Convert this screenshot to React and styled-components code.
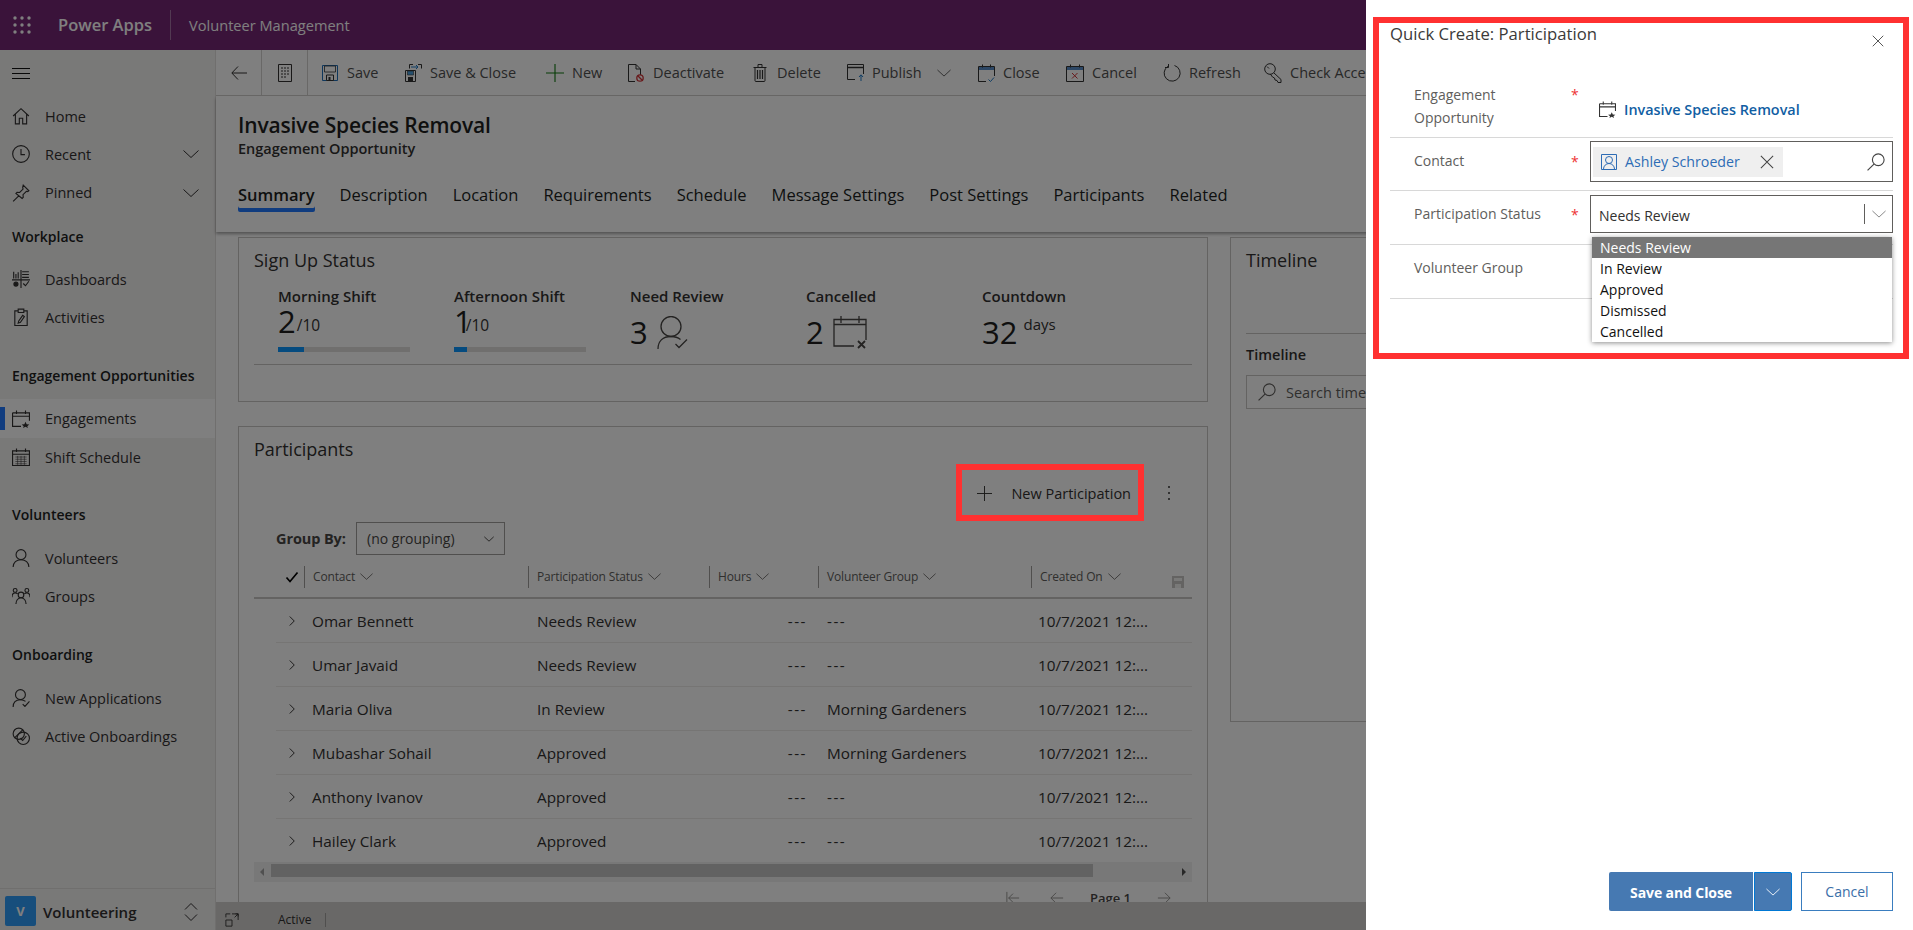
import React from 'react';
import styled, { createGlobalStyle } from 'styled-components';

const GlobalStyle = createGlobalStyle`
  html, body { margin: 0; padding: 0; height: 100%; overflow: hidden; }
  body { font-family: "Open Sans", "Noto Sans", "Liberation Sans", sans-serif; color: #323130; background: #fff; }
  * { box-sizing: border-box; }
`;

const Page = styled.div`
  position: relative;
  width: 1913px;
  height: 930px;
  overflow: hidden;
  display: flex;
  flex-direction: column;
`;
const TopBar = styled.header`
  height: 50px;
  flex: none;
  background: #742774;
  color: #fff;
  display: flex;
  align-items: center;
  padding-left: 13px;
`;
const AppName = styled.div`
  margin-left: 27px;
  font-size: 16.5px;
  font-weight: 600;
  padding-right: 18px;
  border-right: 1px solid rgba(255,255,255,.35);
  line-height: 30px;
`;
const EnvName = styled.div`
  margin-left: 18px;
  font-size: 14.6px;
`;
const Body = styled.div`
  flex: 1;
  display: flex;
  min-height: 0;
`;
const Nav = styled.nav`
  width: 216px;
  flex: none;
  background: #f3f2f1;
  border-right: 1px solid #e1dfdd;
  display: flex;
  flex-direction: column;
  font-size: 14.5px;
`;
const Burger = styled.div`
  height: 47px;
  display: flex;
  align-items: center;
  padding-left: 12px;
  color: #111;
`;
const NavItem = styled.div`
  position: relative;
  height: ${p => p.h || 38}px;
  display: flex;
  align-items: center;
  gap: 15px;
  padding-left: 12px;
  color: #323130;
  background: ${p => p.active ? '#fff' : 'transparent'};
  ${p => p.active && `
    &::before {
      content: "";
      position: absolute;
      left: 0;
      top: 8px;
      width: 5px;
      height: 23px;
      background: #2079ff;
    }
  `}
  svg { flex: none; }
  svg.chev { margin-left: auto; margin-right: 16px; }
`;
const NavTitle = styled.div`
  height: 38px;
  margin-top: ${p => p.mt || 19}px;
  margin-bottom: ${p => p.mb || 5}px;
  display: flex;
  align-items: center;
  padding-left: 12px;
  font-size: 14px;
  font-weight: 600;
  color: #201f1e;
`;
const AreaSwitch = styled.div`
  margin-top: auto;
  height: 42px;
  border-top: 1px solid #e1dfdd;
  display: flex;
  align-items: flex-start;
  padding: 7px 0 0 5px;
  font-size: 15px;
  font-weight: 600;
`;
const AreaTile = styled.div`
  width: 31px;
  height: 30px;
  border-radius: 2px;
  background: #2e9cf8;
  color: #fff;
  font-size: 13px;
  font-weight: 700;
  display: flex;
  align-items: center;
  justify-content: center;
  margin-right: 7px;
`;
const AreaName = styled.div`
  line-height: 33px;
  flex: 1;
`;
const AreaArrows = styled.div`
  margin-right: 17px;
  margin-top: 7px;
  color: #323130;
  line-height: 0;
`;
const Main = styled.main`
  flex: 1;
  min-width: 0;
  background: #fff;
  display: flex;
  flex-direction: column;
`;
const Toolbar = styled.div`
  height: 46px;
  flex: none;
  display: flex;
  align-items: stretch;
  border-bottom: 1px solid #d2d0ce;
  font-size: 14.5px;
  color: #505050;
  white-space: nowrap;
  overflow: hidden;
`;
const ToolSquare = styled.div`
  width: 46px;
  display: flex;
  align-items: center;
  justify-content: center;
  border-right: 1px solid #d2d0ce;
  color: #323130;
`;
const ToolButtons = styled.div`
  display: flex;
  align-items: stretch;
  margin-left: 5px;
`;
const ToolButton = styled.div`
  display: flex;
  align-items: center;
  width: ${p => p.w ? p.w + 'px' : 'auto'};
  svg.caret { margin-left: 15px; }
`;
const ToolIcon = styled.span`
  width: 34px;
  flex: none;
  display: flex;
  justify-content: center;
  align-items: center;
  line-height: 0;
`;
const RecordHead = styled.div`
  height: 136px;
  flex: none;
  padding: 16px 0 0 22px;
  box-shadow: 0 2px 3px rgba(0,0,0,.35);
  position: relative;
  z-index: 1;
`;
const RecordTitle = styled.div`
  font-size: 21px;
  font-weight: 600;
  line-height: 27px;
  color: #201f1e;
  letter-spacing: -0.15px;
`;
const RecordType = styled.div`
  font-size: 14.5px;
  font-weight: 600;
  line-height: 20px;
  color: #323130;
`;
const Tabs = styled.div`
  display: flex;
  gap: 25px;
  margin-top: 24px;
`;
const Tab = styled.div`
  font-size: 16.5px;
  line-height: 24px;
  padding-bottom: 5px;
  color: #201f1e;
  font-weight: ${p => p.active ? 600 : 400};
  ${p => p.active && `
    box-shadow: inset 0 -4px 0 #2079ff;
    border-radius: 2px;
  `}
`;
const Content = styled.div`
  flex: 1;
  min-height: 0;
  overflow: hidden;
  padding: 5px 0 0 22px;
  display: grid;
  grid-template-columns: 970px 680px;
  column-gap: 22px;
  align-content: start;
`;
const LeftCol = styled.div`
  display: flex;
  flex-direction: column;
  gap: 24px;
`;
const Card = styled.section`
  border: 1px solid #c8c6c4;
  padding: 0 15px;
  height: ${p => p.h}px;
  overflow: hidden;
`;
const CardTitle = styled.div`
  font-size: 18px;
  line-height: 24px;
  padding-top: 10px;
  box-sizing: content-box;
  color: #323130;
`;
const Stats = styled.div`
  display: grid;
  grid-template-columns: repeat(5, 176px);
  padding: 14px 0 0 24px;
  height: 93px;
  border-bottom: 1px solid #c8c6c4;
`;
const StatLabel = styled.div`
  font-size: 15px;
  font-weight: 600;
  line-height: 20px;
  color: #323130;
`;
const StatValue = styled.div`
  display: flex;
  align-items: flex-end;
  height: 29px;
  margin-top: ${p => p.mt || 1}px;
  font-size: 31px;
  line-height: 29px;
  color: #201f1e;
  small {
    font-size: 15.5px;
    line-height: 22px;
    margin-left: ${p => p.tight ? -6 : 1}px;
    color: #323130;
  }
  sup {
    font-size: 15px;
    line-height: 14px;
    align-self: flex-start;
    margin: -1px 0 0 6px;
    color: #323130;
  }
  svg { margin: 0 0 -2px 9px; flex: none; }
`;
const Progress = styled.div`
  width: 132px;
  height: 5px;
  margin-top: 11px;
  background: #e1dfdd;
  div { height: 100%; background: #0a96ff; }
`;
const CommandRow = styled.div`
  display: flex;
  justify-content: flex-end;
  align-items: center;
  height: 44px;
  margin-top: 10px;
  font-size: 14.5px;
  color: #323130;
  padding-right: 21px;
`;
const CommandBtn = styled.div`
  display: flex;
  align-items: center;
  gap: 19px;
  margin-right: 36px;
`;
const GroupRow = styled.div`
  display: flex;
  align-items: center;
  height: 33px;
  margin-top: 7px;
  padding-left: 22px;
`;
const GroupLabel = styled.div`
  width: 80px;
  font-size: 14.5px;
  font-weight: 700;
  letter-spacing: -0.1px;
  color: #484644;
`;
const GroupSelect = styled.div`
  width: 149px;
  height: 33px;
  border: 1px solid #a19f9d;
  display: flex;
  align-items: center;
  justify-content: space-between;
  padding: 0 10px;
  font-size: 14px;
  color: #484644;
`;
const GridHead = styled.div`
  display: grid;
  grid-template-columns: 50px 224px 181px 109px 213px 1fr;
  height: 44px;
  border-bottom: 2px solid #c8c6c4;
  font-size: 12px;
  letter-spacing: -0.15px;
  color: #605e5c;
`;
const HeadCell = styled.div`
  margin: 11px 0 9px;
  display: flex;
  align-items: center;
  gap: 5px;
  padding-left: 8px;
  ${p => p.ruled && 'border-left: 1px solid #a19f9d;'}
  ${p => p.center && 'padding-left: 31px;'}
  ${p => p.spread && 'justify-content: space-between; padding-right: 8px;'}
  svg.mini { margin-top: 10px; }
`;
const HeadGroup = styled.span`
  display: flex;
  align-items: center;
  gap: 5px;
  padding-bottom: 2px;
`;
const GridRow = styled.div`
  display: grid;
  grid-template-columns: 36px 225px 181px 109px 211px 1fr;
  height: 44px;
  margin-left: 22px;
  align-items: center;
  font-size: 15.3px;
  color: #323130;
  white-space: nowrap;
  border-bottom: 1px solid ${p => p.last ? 'transparent' : '#edebe9'};
`;
const RowChevron = styled.div`
  padding-left: 10px;
  line-height: 0;
`;
const DashCell = styled.div`
  text-align: right;
  padding-right: 20px;
  letter-spacing: 1.5px;
`;
const DashText = styled.span`
  letter-spacing: 1.5px;
`;
const ScrollTrack = styled.div`
  height: 20px;
  margin-top: -1px;
  background: #f0f0f0;
  display: flex;
  align-items: center;
  justify-content: space-between;
  padding: 0 6px;
  position: relative;
`;
const ScrollThumb = styled.div`
  position: absolute;
  left: 17px;
  top: 2px;
  width: 822px;
  height: 13px;
  background: #c4c4c4;
`;
const Arrow = styled.div`
  width: 0;
  height: 0;
  border-top: 4px solid transparent;
  border-bottom: 4px solid transparent;
  ${p => p.right ? 'border-left: 4px solid #505050;' : 'border-right: 4px solid #a0a0a0;'}
`;
const Pager = styled.div`
  display: flex;
  justify-content: flex-end;
  align-items: center;
  gap: 26px;
  height: 24px;
  margin-top: 4px;
  padding-right: 21px;
  font-size: 13px;
  font-weight: 600;
  color: #484644;
  svg:first-child { margin-right: 4px; }
`;
const RightCol = styled.div`
  display: block;
`;
const TimelineHead = styled.div`
  height: 96px;
  border-bottom: 1px solid #c8c6c4;
`;
const TimelineLabel = styled.div`
  margin-top: 11px;
  font-size: 14.5px;
  font-weight: 600;
  line-height: 20px;
  color: #323130;
`;
const TimelineSearch = styled.div`
  margin-top: 10px;
  height: 34px;
  border: 1px solid #c8c6c4;
  display: flex;
  align-items: center;
  gap: 10px;
  padding-left: 11px;
  font-size: 14.5px;
  color: #605e5c;
`;
const StatusBar = styled.footer`
  height: 28px;
  flex: none;
  background: #d2d0ce;
  display: flex;
  align-items: center;
  padding: 8px 0 0 9px;
  font-size: 12px;
  color: #323130;
  position: relative;
  z-index: 2;
`;
const StatusText = styled.div`
  margin-left: 39px;
  padding-right: 14px;
  border-right: 1px solid #a19f9d;
  line-height: 14px;
`;
const Scrim = styled.div`
  position: absolute;
  inset: 0;
  background: rgba(0,0,0,.5);
  z-index: 10;
`;
const Callout = styled.div`
  position: absolute;
  left: 956px;
  top: 464px;
  width: 188px;
  height: 57px;
  border: 6px solid #ff3131;
  z-index: 11;
`;
const Panel = styled.aside`
  position: absolute;
  top: 0;
  right: 0;
  bottom: 0;
  width: 547px;
  background: #fff;
  z-index: 12;
  padding: 17px 4px 19px 7px;
  display: flex;
  flex-direction: column;
`;
const QuickForm = styled.div`
  height: 342px;
  border: 6px solid #ff3131;
  padding: 0 10px 0 11px;
  position: relative;
`;
const FormHead = styled.div`
  height: 43px;
  display: flex;
  justify-content: space-between;
  padding: 0 9px 0 0;
`;
const FormTitle = styled.div`
  font-size: 16.7px;
  line-height: 22px;
  color: #3b3a39;
`;
const FormClose = styled.div`
  margin-top: 12px;
  line-height: 0;
  color: #444;
`;
const FieldRow = styled.div`
  display: grid;
  grid-template-columns: 181px 19px 1fr;
  height: ${p => p.h}px;
  border-bottom: 1px solid #d8d8d8;
`;
const FieldLabel = styled.div`
  padding: ${p => p.pt}px 0 0 24px;
  font-size: 14px;
  line-height: 23px;
  color: #605e5c;
`;
const Star = styled.div`
  color: #e33;
  font-size: 14px;
  line-height: 14px;
  padding-top: ${p => p.pt}px;
`;
const FormValue = styled.div`
  padding-top: ${p => p.pt || 0}px;
`;
const LookupLink = styled.div`
  display: flex;
  align-items: center;
  gap: 8px;
  padding: 16px 0 0 9px;
  font-size: 14.4px;
  font-weight: 600;
  color: #115ea3;
  svg { color: #333; }
`;
const InputBox = styled.div`
  height: ${p => p.h}px;
  border: 1px solid #605e5c;
  display: flex;
  align-items: center;
  justify-content: space-between;
`;
const TagChip = styled.div`
  margin-left: 2px;
  width: 190px;
  height: 30px;
  background: #efefef;
  display: flex;
  align-items: center;
  padding: 0 9px 0 8px;
  gap: 8px;
  font-size: 14.2px;
  color: #2d6cb5;
  svg:last-child { margin-left: auto; color: #444; }
`;
const SearchSlot = styled.div`
  margin-right: 7px;
  line-height: 0;
  color: #444;
`;
const SelectText = styled.div`
  padding: 2px 0 0 8px;
  font-size: 14px;
  color: #323130;
`;
const SelectCaret = styled.div`
  width: 28px;
  height: 20px;
  border-left: 1px solid #605e5c;
  display: flex;
  align-items: center;
  justify-content: center;
  color: #777;
`;
const Listbox = styled.div`
  position: absolute;
  left: 213px;
  top: 214px;
  width: 300px;
  background: #fff;
  box-shadow: 0 1px 5px rgba(0,0,0,.45);
  font-size: 14px;
  line-height: 21px;
  z-index: 3;
`;
const ListOption = styled.div`
  padding-left: 8px;
  height: 21px;
  color: ${p => p.selected ? '#fff' : '#111'};
  background: ${p => p.selected ? '#767676' : 'transparent'};
`;
const FormFooter = styled.div`
  margin-top: auto;
  display: flex;
  justify-content: flex-end;
  padding-right: 16px;
`;
const SaveBtn = styled.div`
  width: 144px;
  height: 39px;
  padding-top: 1px;
  background: #4679b2;
  border-radius: 2px 0 0 2px;
  color: #fff;
  font-size: 14px;
  font-weight: 700;
  letter-spacing: -0.1px;
  display: flex;
  align-items: center;
  justify-content: center;
`;
const SaveCaret = styled.div`
  width: 38px;
  height: 39px;
  margin-left: 1px;
  background: #4679b2;
  border: 1px solid #0078d4;
  border-radius: 0 2px 2px 0;
  color: #fff;
  display: flex;
  align-items: center;
  justify-content: center;
`;
const CancelBtn = styled.div`
  width: 92px;
  height: 39px;
  margin-left: 9px;
  border: 1px solid #3a7dbf;
  color: #3a6ea8;
  font-size: 14px;
  display: flex;
  align-items: center;
  justify-content: center;
`;

/* thin line icons, same look as the fluent set */
const Ico = ({ s = 16, c = 'currentColor', w = 1, children }) => (
  <svg width={s} height={s} viewBox="0 0 16 16" fill="none" stroke={c} strokeWidth={w}>{children}</svg>
);
const Chevron = ({ s = 16, dir = 'down', c, className, w }) => {
  const d = {
    down: 'M.5 4.500L8 11.500l7.500-7',
    right: 'M5 2l6 6-6 6',
  }[dir];
  return <svg className={className} width={s} height={s} viewBox="0 0 16 16" fill="none" stroke={c || 'currentColor'} strokeWidth={w || 1}><path d={d} /></svg>;
};
const UpDown = () => <svg width="14" height="18" viewBox="0 0 14 18" fill="none" stroke="currentColor"><path d="M1 6.500l6-6 6 6M1 11.500l6 6 6-6" /></svg>;
const Waffle = () => (
  <svg width="18" height="18" viewBox="0 0 18 18" fill="#fff">
    {[2, 9, 16].map(y => [2, 9, 16].map(x => <circle key={x + '-' + y} cx={x} cy={y} r="1.700" />))}
  </svg>
);
const MenuIco = () => <svg width="18" height="18" viewBox="0 0 18 18" fill="none" stroke="currentColor"><path d="M0 3.500h18M0 8.500h18M0 13.500h18" /></svg>;
const HomeIco = () => <Ico s={18}><path d="M1 8l7-6.500L15 8M3 6.500V15h3.500v-5h3v5H13V6.500" /></Ico>;
const ClockIco = () => <Ico s={18}><circle cx="8" cy="8" r="7.400" /><path d="M8 3.500V8.500h3.500" /></Ico>;
const PinIco = () => <Ico s={18}><path d="M10 1l5 5-1 .8-1.200-.3-3 3 .2 2.300-1 1L3.500 8.300l1-1 2.300.2 3-3L9.500 3zM6 10.500L1 15.500" /></Ico>;
const DashIco = () => <Ico s={18}><path d="M1.500 1.500v6M3.500 3.500v4M5.500 2v5.500M9 1.500h6M9 4h6M9 6.500h6M0 8.800h16M8 0v16M10 12l2 2 3-4" /><circle cx="3.500" cy="12.500" r="1.800" fill="currentColor" /></Ico>;
const ClipIco = () => <Ico s={18}><path d="M5 2.500H2.500v13h11v-13H11M5.500 1h5v3h-5zM9.500 6.500l-3.500 5-.5 2 2-.8 3.500-5z" /></Ico>;
const CalStarIco = ({ s = 18 }) => <Ico s={s}><path d="M.5 2.500h15v7M8 14.500H.5v-12M.5 5.500h15M4 .5v3M12 .5v3" /><path d="M12 10.500l1 2.200 2.400.2-1.800 1.500.6 1.600-2.200-1.200-2.200 1.200.6-1.600-1.800-1.500 2.400-.2z" fill="currentColor" stroke="none" /></Ico>;
const GridCalIco = () => <Ico s={18}><path d="M.5 2.500h15v13H.5zM.5 5.500h15M4 .5v3M12 .5v3" /><path d="M3 8h10M3 10h10M3 12h10M3 14h10M5 7v8M8 7v8M11 7v8" strokeWidth=".5" /></Ico>;
const PersonIco = ({ s = 18 }) => <Ico s={s}><circle cx="8" cy="5" r="4.400" /><path d="M1 16c0-4 3-6.500 7-6.500s7 2.500 7 6.500" /></Ico>;
const GroupsIco = () => <Ico s={18}><circle cx="8" cy="7" r="2.500" /><path d="M3.500 15c0-3 2-5.500 4.500-5.500s4.500 2.500 4.500 5.500" /><circle cx="2.800" cy="3" r="1.700" /><circle cx="13.200" cy="3" r="1.700" /><path d="M0 9c0-2 1-3.800 2.800-3.800 1 0 1.700.4 2.200 1M16 9c0-2-1-3.800-2.800-3.800-1 0-1.700.4-2.200 1" /></Ico>;
const PersonCheckIco = () => <Ico s={18}><circle cx="7.500" cy="5" r="4.400" /><path d="M1 16c0-4 2.500-6.500 6.500-6.500 2 0 3.500.6 4.500 1.500M9.500 13.500l2 2 4-4.500" /></Ico>;
const BadgesIco = () => <Ico s={18}><circle cx="6" cy="6" r="5" /><circle cx="10" cy="10" r="5.500" /><path d="M7.500 10l2 2 3.200-3.800M2.500 9.500l7-7" /></Ico>;
const BackIco = () => <svg width="16" height="14" viewBox="0 0 16 14" fill="none" stroke="currentColor"><path d="M16 7H1M7 .5L.8 7 7 13.500" /></svg>;
const PageIco = () => <svg width="14" height="18" viewBox="0 0 14 18" fill="none" stroke="currentColor"><path d="M.5.500h13v17H.5z" /><path d="M3 4h8M3 7h8M3 10h8M3 13h5" strokeDasharray="2 1" /></svg>;
const SaveIco = () => (
  <svg width="16" height="16" viewBox="0 0 16 16"><path d="M.5.500h15v15H.5z" fill="#fff" stroke="#1e6fb8" /><path d="M2.500 1h11v6h-11z" fill="#fff" stroke="#333" strokeWidth=".8" /><path d="M4.500 10h7v5.500h-7z" fill="#fff" stroke="#333" /><path d="M6.500 12h2v3h-2z" fill="#333" /></svg>
);
const SaveCloseIco = () => (
  <svg width="17" height="18" viewBox="0 0 17 18"><path d="M.5 6.500h10v11H.5z" fill="#fff" stroke="#333" /><path d="M2.500 7h6v4h-6z" fill="#4b9fdc" stroke="#333" strokeWidth=".6" /><path d="M3 13h5v4.500H3z" fill="#333" /><path d="M8 .5H4.500v4M13 .5h3.500v4" fill="none" stroke="#333" /><path d="M6 3h7M11 1l2 2-2 2" fill="none" stroke="#1e7ac8" /></svg>
);
const PlusIco = ({ c = '#107c10', s = 18 }) => <Ico s={s} c={c}><path d="M8 0v16M0 8h16" /></Ico>;
const DeactivateIco = () => (
  <svg width="16" height="18" viewBox="0 0 16 18" fill="none"><path d="M7 17.500H.5V.500H8l4.500 4.500v6M8 .500V5h4.500" stroke="#333" /><circle cx="12" cy="14" r="3.200" stroke="#d13438" strokeWidth="1.300" /><path d="M9.800 11.800l4.400 4.400" stroke="#d13438" strokeWidth="1.300" /></svg>
);
const TrashIco = () => (
  <svg width="14" height="18" viewBox="0 0 14 18" fill="none" stroke="#333"><path d="M.5 3.500h13M2 3.500v13c0 .7.300 1 1 1h8c.7 0 1-.3 1-1v-13M5 3.500v-3h4v3" /><path d="M4.500 6v9M7 6v9M9.500 6v9" strokeWidth="1.200" /></svg>
);
const PublishIco = () => (
  <svg width="17" height="17" viewBox="0 0 17 17" fill="none"><path d="M8 15.500H.5V.500h16V10" stroke="#333" /><path d="M.5 3.500h16" stroke="#333" strokeWidth="1.500" /><path d="M14 17v-6M12 13l2-2.200 2 2.200" stroke="#1e7ac8" /></svg>
);
const CalDoneIco = () => (
  <svg width="17" height="18" viewBox="0 0 17 18" fill="none"><path d="M8 17.500H.5V2.500h16V12" stroke="#333" /><path d="M1 3h15v3H1z" fill="#5a8ecb" /><path d="M4.500.500v3M12.500.500v3" stroke="#333" /><path d="M10.500 15.500l2 2 3.500-4" stroke="#1e7ac8" /></svg>
);
const CalCancelIco = () => (
  <svg width="18" height="18" viewBox="0 0 18 18" fill="none"><path d="M.5 2.500h17v15H.5z" stroke="#333" /><path d="M1 3h16v3H1z" fill="#5a8ecb" /><path d="M4.500.500v3M13.500.500v3" stroke="#333" /><path d="M6 9l5.500 5.500M11.500 9L6 14.500" stroke="#d13438" /></svg>
);
const RefreshIco = () => (
  <svg width="18" height="18" viewBox="0 0 18 18" fill="none" stroke="#333"><path d="M11.500 1.500A8 8 0 1 1 5 2.300" /><path d="M5.500 0v3.500H2" /></svg>
);
const KeyIco = () => (
  <svg width="18" height="20" viewBox="0 0 18 20" fill="none" stroke="#333"><circle cx="6" cy="6" r="5.300" /><path d="M9.800 9.800l7.200 6.700v3h-3l-1-2-2-.5-.5-2-2-1-2.200-3M3 3.500l2 2" /></svg>
);
const SearchIco = ({ s = 18 }) => <Ico s={s}><circle cx="10" cy="6" r="5.200" /><path d="M6.200 9.800L.5 15.500" /></Ico>;
const CloseX = ({ s = 12 }) => <Ico s={s} w={1.200}><path d="M1 1l14 14M15 1L1 15" /></Ico>;
const ContactIco = () => (
  <svg width="16" height="16" viewBox="0 0 16 16" fill="none" stroke="#2d6cb5"><path d="M.5.500h15v15H.5z" /><circle cx="8" cy="6" r="3.500" /><path d="M2.500 15c0-3 2.500-5.500 5.500-5.500s5.500 2.500 5.500 5.500" /></svg>
);
const BigPersonCheck = () => (
  <svg width="31" height="33" viewBox="0 0 31 33" fill="none" stroke="#484644" strokeWidth="1.300"><circle cx="14" cy="10.500" r="10" /><path d="M1 33c0-8 5-12.500 13-12.500 4 0 7 1 9.500 3M18.500 28l3.500 3.500 8-8" /></svg>
);
const BigCalX = () => (
  <svg width="34" height="33" viewBox="0 0 34 33" fill="none" stroke="#484644" strokeWidth="1.300"><path d="M21 30H1V3.500h32V24M1 8.500h32M8 0v7M26 0v7" /><path d="M25 25l7 7M32 25l-7 7" strokeWidth="1.800" /></svg>
);
const Check = () => <svg width="14" height="14" viewBox="0 0 14 14" fill="none" stroke="#000" strokeWidth="1.700"><path d="M1.500 7.500l3.500 4 7.500-9" /></svg>;
const Dots = () => <svg width="4" height="16" viewBox="0 0 4 16" fill="#333"><circle cx="2" cy="2" r="1" /><circle cx="2" cy="8" r="1" /><circle cx="2" cy="14" r="1" /></svg>;
const MiniSave = () => <svg className="mini" width="12" height="12" viewBox="0 0 12 12"><path d="M0 0h12v12H0z" fill="#c8c6c4" /><path d="M2 2h8v3H2zM3 8h6v4H3z" fill="#f3f2f1" /></svg>;
const PageFirst = () => <Ico s={14} c="#8a8886"><path d="M1 1v14M15 8H3M8 3L3 8l5 5" /></Ico>;
const PageArrow = ({ dir }) => <Ico s={14} c="#8a8886"><path d={dir === 'left' ? 'M15 8H1M7 2L1 8l6 6' : 'M1 8h14M9 2l6 6-6 6'} /></Ico>;
const ExpandIco = () => <Ico s={14} c="#323130"><path d="M1 8h7v7H1zM8 1h7v7M6 1H1v4M11 5l4-4M12 1h3v3" /></Ico>;

const rows = [
  ['Omar Bennett', 'Needs Review', '---'],
  ['Umar Javaid', 'Needs Review', '---'],
  ['Maria Oliva', 'In Review', 'Morning Gardeners'],
  ['Mubashar Sohail', 'Approved', 'Morning Gardeners'],
  ['Anthony Ivanov', 'Approved', '---'],
  ['Hailey Clark', 'Approved', '---'],
];

const tools = [
  { label: 'Save', icon: <SaveIco />, w: 83 },
  { label: 'Save & Close', icon: <SaveCloseIco />, w: 142 },
  { label: 'New', icon: <PlusIco />, w: 81 },
  { label: 'Deactivate', icon: <DeactivateIco />, w: 124 },
  { label: 'Delete', icon: <TrashIco />, w: 95 },
  { label: 'Publish', icon: <PublishIco />, w: 131, caret: true },
  { label: 'Close', icon: <CalDoneIco />, w: 89 },
  { label: 'Cancel', icon: <CalCancelIco />, w: 97 },
  { label: 'Refresh', icon: <RefreshIco />, w: 101 },
  { label: 'Check Access', icon: <KeyIco /> },
];

export default function App() {
  return (
    <Page>
      <GlobalStyle />
      <TopBar>
        <Waffle />
        <AppName>Power Apps</AppName>
        <EnvName>Volunteer Management</EnvName>
      </TopBar>
      <Body>
        <Nav>
          <Burger><MenuIco /></Burger>
          <NavItem><HomeIco />Home</NavItem>
          <NavItem><ClockIco />Recent<Chevron className="chev" /></NavItem>
          <NavItem h={39}><PinIco />Pinned<Chevron className="chev" /></NavItem>
          <NavTitle mt={5}>Workplace</NavTitle>
          <NavItem><DashIco />Dashboards</NavItem>
          <NavItem><ClipIco />Activities</NavItem>
          <NavTitle mt={20}>Engagement Opportunities</NavTitle>
          <NavItem active h={39}><CalStarIco />Engagements</NavItem>
          <NavItem><GridCalIco />Shift Schedule</NavItem>
          <NavTitle mb={6}>Volunteers</NavTitle>
          <NavItem><PersonIco />Volunteers</NavItem>
          <NavItem><GroupsIco />Groups</NavItem>
          <NavTitle mt={20} mb={6}>Onboarding</NavTitle>
          <NavItem><PersonCheckIco />New Applications</NavItem>
          <NavItem><BadgesIco />Active Onboardings</NavItem>
          <AreaSwitch>
            <AreaTile>V</AreaTile>
            <AreaName>Volunteering</AreaName>
            <AreaArrows><UpDown /></AreaArrows>
          </AreaSwitch>
        </Nav>
        <Main>
          <Toolbar>
            <ToolSquare><BackIco /></ToolSquare>
            <ToolSquare><PageIco /></ToolSquare>
            <ToolButtons>
              {tools.map(t => (
                <ToolButton key={t.label} w={t.w}>
                  <ToolIcon>{t.icon}</ToolIcon>
                  {t.label}
                  {t.caret && <Chevron className="caret" s={14} />}
                </ToolButton>
              ))}
            </ToolButtons>
          </Toolbar>
          <RecordHead>
            <RecordTitle>Invasive Species Removal</RecordTitle>
            <RecordType>Engagement Opportunity</RecordType>
            <Tabs>
              <Tab active>Summary</Tab>
              <Tab>Description</Tab>
              <Tab>Location</Tab>
              <Tab>Requirements</Tab>
              <Tab>Schedule</Tab>
              <Tab>Message Settings</Tab>
              <Tab>Post Settings</Tab>
              <Tab>Participants</Tab>
              <Tab>Related</Tab>
            </Tabs>
          </RecordHead>
          <Content>
            <LeftCol>
              <Card h={165}>
                <CardTitle>Sign Up Status</CardTitle>
                <Stats>
                  <div>
                    <StatLabel>Morning Shift</StatLabel>
                    <StatValue>2<small>/10</small></StatValue>
                    <Progress><div style={{ width: '20%' }} /></Progress>
                  </div>
                  <div>
                    <StatLabel>Afternoon Shift</StatLabel>
                    <StatValue tight>1<small>/10</small></StatValue>
                    <Progress><div style={{ width: '10%' }} /></Progress>
                  </div>
                  <div>
                    <StatLabel>Need Review</StatLabel>
                    <StatValue mt={12}>3<BigPersonCheck /></StatValue>
                  </div>
                  <div>
                    <StatLabel>Cancelled</StatLabel>
                    <StatValue mt={12}>2<BigCalX /></StatValue>
                  </div>
                  <div>
                    <StatLabel>Countdown</StatLabel>
                    <StatValue mt={12}>32<sup>days</sup></StatValue>
                  </div>
                </Stats>
              </Card>
              <Card h={520}>
                <CardTitle>Participants</CardTitle>
                <CommandRow>
                  <CommandBtn><PlusIco c="#323130" s={15} />New Participation</CommandBtn>
                  <Dots />
                </CommandRow>
                <GroupRow>
                  <GroupLabel>Group By:</GroupLabel>
                  <GroupSelect>(no grouping)<Chevron s={10} w={1.500} /></GroupSelect>
                </GroupRow>
                <GridHead>
                  <HeadCell center><Check /></HeadCell>
                  <HeadCell ruled><HeadGroup>Contact<Chevron s={13} /></HeadGroup></HeadCell>
                  <HeadCell ruled><HeadGroup>Participation Status<Chevron s={13} /></HeadGroup></HeadCell>
                  <HeadCell ruled><HeadGroup>Hours<Chevron s={13} /></HeadGroup></HeadCell>
                  <HeadCell ruled><HeadGroup>Volunteer Group<Chevron s={13} /></HeadGroup></HeadCell>
                  <HeadCell ruled spread><HeadGroup>Created On<Chevron s={13} /></HeadGroup><MiniSave /></HeadCell>
                </GridHead>
                {rows.map((r, i) => (
                  <GridRow key={r[0]} last={i === rows.length - 1}>
                    <RowChevron><Chevron s={12} dir="right" w={1.300} /></RowChevron>
                    <div>{r[0]}</div>
                    <div>{r[1]}</div>
                    <DashCell>---</DashCell>
                    <div>{r[2] === '---' ? <DashText>---</DashText> : r[2]}</div>
                    <div>10/7/2021 12:...</div>
                  </GridRow>
                ))}
                <ScrollTrack>
                  <Arrow />
                  <ScrollThumb />
                  <Arrow right />
                </ScrollTrack>
                <Pager>
                  <PageFirst />
                  <PageArrow dir="left" />
                  <span>Page 1</span>
                  <PageArrow dir="right" />
                </Pager>
              </Card>
            </LeftCol>
            <RightCol>
              <Card h={485}>
                <TimelineHead><CardTitle>Timeline</CardTitle></TimelineHead>
                <TimelineLabel>Timeline</TimelineLabel>
                <TimelineSearch><SearchIco s={18} />Search timeline</TimelineSearch>
              </Card>
            </RightCol>
          </Content>
          <StatusBar>
            <ExpandIco />
            <StatusText>Active</StatusText>
          </StatusBar>
        </Main>
      </Body>
      <Scrim />
      <Callout />
      <Panel>
        <QuickForm>
          <FormHead>
            <FormTitle>Quick Create: Participation</FormTitle>
            <FormClose><CloseX /></FormClose>
          </FormHead>
          <FieldRow h={72}>
            <FieldLabel pt={17}>Engagement<br />Opportunity</FieldLabel>
            <Star pt={22}>*</Star>
            <LookupLink><CalStarIco s={17} />Invasive Species Removal</LookupLink>
          </FieldRow>
          <FieldRow h={53}>
            <FieldLabel pt={11}>Contact</FieldLabel>
            <Star pt={17}>*</Star>
            <FormValue pt={3}>
              <InputBox h={41}>
                <TagChip><ContactIco />Ashley Schroeder<CloseX s={14} /></TagChip>
                <SearchSlot><SearchIco /></SearchSlot>
              </InputBox>
            </FormValue>
          </FieldRow>
          <FieldRow h={54}>
            <FieldLabel pt={11}>Participation Status</FieldLabel>
            <Star pt={17}>*</Star>
            <FormValue pt={4}>
              <InputBox h={38}>
                <SelectText>Needs Review</SelectText>
                <SelectCaret><Chevron s={14} /></SelectCaret>
              </InputBox>
            </FormValue>
          </FieldRow>
          <FieldRow h={54}>
            <FieldLabel pt={11}>Volunteer Group</FieldLabel>
          </FieldRow>
          <Listbox>
            <ListOption selected>Needs Review</ListOption>
            <ListOption>In Review</ListOption>
            <ListOption>Approved</ListOption>
            <ListOption>Dismissed</ListOption>
            <ListOption>Cancelled</ListOption>
          </Listbox>
        </QuickForm>
        <FormFooter>
          <SaveBtn>Save and Close</SaveBtn>
          <SaveCaret><Chevron s={14} /></SaveCaret>
          <CancelBtn>Cancel</CancelBtn>
        </FormFooter>
      </Panel>
    </Page>
  );
}
